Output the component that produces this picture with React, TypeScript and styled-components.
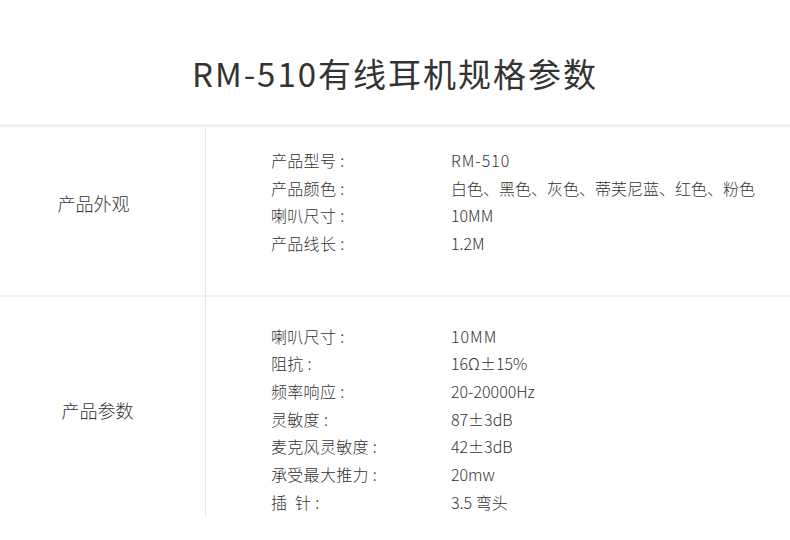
import styled, { createGlobalStyle } from "styled-components";

const GlobalStyle = createGlobalStyle`
    body {
        margin: 0;
        background: #fff;
        font-family: "Noto Sans CJK SC", "Noto Sans", sans-serif;
        color: #333;
    }
`;

const Page = styled.div`
    width: 790px;
    background: #fff;
`;

const Header = styled.div`
    height: 127px;
    display: flex;
    justify-content: center;
    align-items: center;
    padding-top: 23px;
    box-sizing: border-box;
    border-bottom: 3px solid #f1f1f1;
`;

const Title = styled.h1`
    margin: 0;
    font-size: 33px;
    font-weight: 400;
    letter-spacing: 2px;
    color: #333;
    line-height: 1;
`;

const Section = styled.section<{ $last?: boolean }>`
    display: grid;
    grid-template-columns: 206px 1fr;
    border-bottom: ${(p) => (p.$last ? "none" : "2px solid #f1f1f1")};
`;

const SideLabel = styled.div<{ $dx: number; $dy: number }>`
    display: flex;
    align-items: center;
    justify-content: center;
    border-right: 1px solid #e6e6e6;
    padding-right: ${(p) => p.$dx}px;
    padding-top: ${(p) => (p.$dy > 0 ? p.$dy : 0)}px;
    padding-bottom: ${(p) => (p.$dy < 0 ? -p.$dy : 0)}px;
    font-size: 18px;
    font-weight: 300;
    color: #333;
`;

const SpecList = styled.dl<{ $top: number; $bottom: number }>`
    margin: 0;
    padding: ${(p) => p.$top}px 0 ${(p) => p.$bottom}px 65px;
    display: grid;
    grid-template-columns: 180px 1fr;
    grid-auto-rows: 27.7px;
    align-items: center;
    font-size: 16px;
    font-weight: 300;
    color: #333;
`;

const Key = styled.dt`
    margin: 0;
    white-space: pre;
    letter-spacing: 0.3px;
`;

const Colon = styled.span`
    margin-left: 4px;
`;

const Value = styled.dd<{ $spaced?: boolean }>`
    margin: 0;
    letter-spacing: ${(p) => (p.$spaced ? "1px" : "0")};
    white-space: nowrap;
`;

type Spec = { k: string; v: string; spaced?: boolean };

const looks: Spec[] = [
    { k: "产品型号", v: "RM-510", spaced: true },
    { k: "产品颜色", v: "白色、黑色、灰色、蒂芙尼蓝、红色、粉色" },
    { k: "喇叭尺寸", v: "10MM" },
    { k: "产品线长", v: "1.2M" },
];

const params: Spec[] = [
    { k: "喇叭尺寸", v: "10MM", spaced: true },
    { k: "阻抗", v: "16Ω±15%" },
    { k: "频率响应", v: "20-20000Hz" },
    { k: "灵敏度", v: "87±3dB" },
    { k: "麦克风灵敏度", v: "42±3dB" },
    { k: "承受最大推力", v: "20mw" },
    { k: "插  针", v: "3.5 弯头" },
];

type BlockProps = {
    label: string;
    items: Spec[];
    top: number;
    bottom: number;
    dx: number;
    dy: number;
    last?: boolean;
};

const SpecBlock = ({ label, items, top, bottom, dx, dy, last }: BlockProps) => (
    <Section $last={last}>
        <SideLabel $dx={dx} $dy={dy}>{label}</SideLabel>
        <SpecList $top={top} $bottom={bottom}>
            {items.flatMap((s) => [
                <Key key={s.k + "k"}>
                    {s.k}
                    <Colon>:</Colon>
                </Key>,
                <Value key={s.k + "v"} $spaced={s.spaced}>
                    {s.v}
                </Value>,
            ])}
        </SpecList>
    </Section>
);

export default function App() {
    return (
        <Page>
            <GlobalStyle />
            <Header>
                <Title>RM-510有线耳机规格参数</Title>
            </Header>
            <SpecBlock label="产品外观" items={looks} top={19} bottom={38} dx={18} dy={-16} />
            <SpecBlock label="产品参数" items={params} top={25} bottom={0} dx={10} dy={7} last />
        </Page>
    );
}
